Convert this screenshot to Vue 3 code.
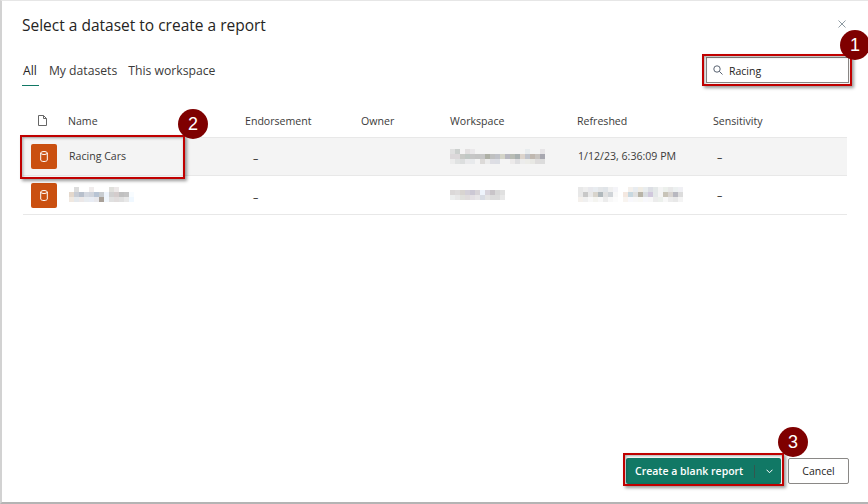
<template>
  <div class="page">
    <div class="dialog">
      <div class="title-row">
        <h1 class="title">Select a dataset to create a report</h1>
        <svg class="close" width="8" height="8" viewBox="0 0 8 8">
          <path d="M.5 .5 7.500 7.500M7.500 .5 .5 7.500" stroke="#8f9ba3" stroke-width="1" fill="none" />
        </svg>
      </div>

      <div class="tool-row">
        <div class="tabs">
          <span class="tab active">All</span>
          <span class="tab">My datasets</span>
          <span class="tab">This workspace</span>
        </div>
        <div class="search">
          <svg width="10" height="10" viewBox="0 0 10 10">
            <circle cx="4" cy="4" r="3.200" stroke="#5a6472" fill="none" />
            <path d="M6.300 6.300 9.500 9.500" stroke="#5a6472" fill="none" />
          </svg>
          <span class="search-text">Racing</span>
        </div>
      </div>

      <div class="table">
        <div class="row head">
          <div class="cell-icon">
            <svg width="9" height="11" viewBox="0 0 9 11">
              <path d="M.5 .5h5l3 3v7H.5zM5.500 .5v3h3" stroke="#666" fill="none" />
            </svg>
          </div>
          <div>Name</div>
          <div>Endorsement</div>
          <div>Owner</div>
          <div>Workspace</div>
          <div>Refreshed</div>
          <div>Sensitivity</div>
        </div>

        <div v-for="row in rows" :key="row.id" class="row" :class="{ selected: row.selected }">
          <div class="cell-icon">
            <div class="dataset-icon">
              <svg width="8" height="11" viewBox="0 0 8 11">
                <ellipse cx="4" cy="2" rx="3.300" ry="1.500" stroke="#fff" fill="none" />
                <path d="M.7 2v7c0 .9 1.500 1.500 3.300 1.500s3.300-.6 3.300-1.500V2" stroke="#fff" fill="none" />
              </svg>
            </div>
          </div>
          <div class="name">
            <span v-if="row.name">{{ row.name }}</span>
            <svg v-else class="blur" :width="mosaicWidth(row.blurName)" :height="row.blurName.length * 5">
              <rect v-for="c in cells(row.blurName)" :key="c.k" :x="c.x" :y="c.y" width="5" height="5" :fill="c.fill" />
            </svg>
          </div>
          <div class="dash low">–</div>
          <div></div>
          <div class="space">
            <svg class="blur" :width="mosaicWidth(row.blurSpace)" :height="row.blurSpace.length * 5">
              <rect v-for="c in cells(row.blurSpace)" :key="c.k" :x="c.x" :y="c.y" width="5" height="5" :fill="c.fill" />
            </svg>
          </div>
          <div class="refreshed">
            <span v-if="row.refreshed">{{ row.refreshed }}</span>
            <svg v-else class="blur" :width="mosaicWidth(row.blurDate)" :height="row.blurDate.length * 5">
              <rect v-for="c in cells(row.blurDate)" :key="c.k" :x="c.x" :y="c.y" width="5" height="5" :fill="c.fill" />
            </svg>
          </div>
          <div class="dash">–</div>
        </div>
      </div>

      <div class="footer">
        <div class="primary">
          <span class="primary-label">Create a blank report</span>
          <span class="split"></span>
          <svg width="7" height="5" viewBox="0 0 7 5">
            <path d="M.5 .7 3.500 3.700 6.500 .7" stroke="#fff" fill="none" />
          </svg>
        </div>
        <div class="cancel">Cancel</div>
      </div>
    </div>

    <div class="callout box-search"></div>
    <div class="callout box-row"></div>
    <div class="callout box-button"></div>
    <div class="badge badge-1">1</div>
    <div class="badge badge-2">2</div>
    <div class="badge badge-3">3</div>
  </div>
</template>

<script setup>
// blurred cells from the screenshot, one string per line of 5px blocks, "-" = nothing
const rows = [
  {
    id: 1,
    selected: true,
    name: 'Racing Cars',
    refreshed: '1/12/23, 6:36:09 PM',
    blurSpace: [
      'e0e0e0 ccd0ce - e2e0e0 eae8ea - - - - - - - - - - e8ecee - - e6e4e6',
      'dcd8da dcd8da c8cac6 c0c8c4 c6c6c6 c4c4c4 c6c6c6 aeb0a6 bfc0c0 c0c2c8 d4d4c8 b8b8c0 b8bcb4 a8b0b0 dcd4cc c0c4cc c0b8b0 c8c4c0 a8a8b0',
      'ececec e0e2e2 dcdede eaeaec e8eaec - dcdad8 ececec dedee4 dcdee4 - - eceaea dedee0 ececec ecece8 e8e8e4 dedcdc dcdcdc',
    ],
  },
  {
    id: 2,
    name: '',
    blurName: [
      '- dcdcdc - - f0ecec - - - e0e0dc ece8e8 - - -',
      'e4d8cc c8ccd4 b8c0cc d4d8e0 d0d4dc b8c4d4 c8ccd0 eef4fc d0d0d0 d4cccc c0c0c0 c4c4c4 f8fcff',
      'f0e8e0 e4e8ec ece8e8 e8ecf0 e8ecf4 e8e8ec a8a098 f0f6fc e0e0e0 e0dcdc e0e0e0 e8e8e8 f0f8ff',
    ],
    blurSpace: [
      'dbd8d8 dedcdc d8d4d0 d4d0d8 ccc8d4 d8d4d8 eef4fc d8d4dc c8c4c8 d8d8d8 e0e0e0',
      'eceeee e8e8e8 e0e0dc e0dcdc e4e0e4 e8e6e8 d8dce4 e4e4e4 dcdcdc dcdcdc e8e8e8',
    ],
    blurDate: [
      'e8e8e8 eeeeee e8e8ec e8ecf0 e4e6e8 e0e4e8 f0f0f0 f4f4f8 - - f4f0ec e8ecf0 f0ece4 e8ecee dcdee4 e4e8e8 f4f4f4 ecf0ec e8e8e8 ecf0f0 f0f0f4 -',
      'e8e8e8 c8c8c8 e8e8e8 d8d4cc b0b8bc e0e0e0 d0d4d8 f8f8f8 - f4e8e0 c8d8e0 e0e0e0 b8b4a8 d8dce0 d0c8dc e4e8e8 f4f4f4 c8c4b8 d8d4d0 b8b8c0 dcdcdc -',
      'f4f0ec f0f0f0 f8f8f8 f4f4f0 f8f8f8 ececec f8f8f8 fcfcfc - f8f4f0 f8f8fc f8f8f8 f8f8f4 f8f8fc f8f8f8 ececec ecf0ec f8f8f8 ececec e8e8e8 f4f4f4 -',
    ],
  },
]

function mosaicWidth(lines) {
  return lines[0].split(' ').length * 5
}

function cells(lines) {
  const out = []
  lines.forEach((line, y) => {
    line.split(' ').forEach((hex, x) => {
      if (hex !== '-') out.push({ k: x + '-' + y, x: x * 5, y: y * 5, fill: '#' + hex })
    })
  })
  return out
}
</script>

<style>
html,
body {
  margin: 0;
  background: #fff;
}
</style>

<style scoped>
.page {
  position: relative;
  width: 868px;
  height: 504px;
  overflow: hidden;
  box-sizing: border-box;
  background: #fff;
  border-top: 1px solid #e6e6e6;
  border-left: 2px solid #d2d2d2;
  border-bottom: 2px solid #b4b4b4;
  font-family: "Open Sans", "Noto Sans", sans-serif;
  color: #252423;
}

.dialog {
  display: flex;
  flex-direction: column;
  height: 100%;
  box-sizing: border-box;
  padding: 0 19px 18px 20px;
}

.title-row {
  display: flex;
  align-items: center;
  justify-content: space-between;
  height: 50px;
}

.title {
  margin: -2px 0 0;
  font-size: 15.500px;
  font-weight: 500;
  color: #252423;
}

.close {
  margin-top: -5px;
  margin-right: 3px;
}

.tool-row {
  display: flex;
  justify-content: space-between;
  align-items: flex-start;
  margin-top: 5px;
  height: 31px;
}

.tabs {
  display: flex;
  gap: 11px;
  font-size: 12.200px;
  padding-top: 6px;
}

.tab {
  color: #3b3a39;
  height: 23px;
}

.tab.active {
  color: #252423;
  border-bottom: 1px solid #117865;
  padding: 0 2px 0 1px;
  margin-right: -1px;
}

.search {
  display: flex;
  align-items: center;
  gap: 6px;
  width: 143px;
  height: 26px;
  box-sizing: border-box;
  margin-top: 1px;
  padding-left: 6px;
  border: 1px solid #8a8886;
  font-size: 10.500px;
  color: #252423;
}

.search-text {
  padding-top: 2px;
}

.table {
  margin-top: 14px;
  padding-left: 1px;
  width: 824px;
}

.row {
  display: grid;
  grid-template-columns: 46px 177px 116px 89px 127px 136px 133px;
  align-items: center;
  height: 38px;
  font-size: 10.600px;
  color: #3b3a39;
  border-bottom: 1px solid #e8e8e8;
}

.row.head {
  grid-template-columns: 45px 177px 116px 89px 127px 136px 134px;
  height: 36px;
  align-items: start;
  line-height: 40px;
}

.row.selected {
  height: 37px;
  background: #f4f4f4;
}

.cell-icon {
  display: flex;
  padding-left: 8px;
}

.head .cell-icon {
  padding-left: 15px;
  padding-top: 14px;
  line-height: 0;
}

.dataset-icon {
  display: flex;
  align-items: center;
  justify-content: center;
  width: 26px;
  height: 25px;
  border-radius: 2px;
  background: #ca5010;
}

.name {
  padding-bottom: 2px;
}

.space {
  margin-left: -1px;
}

.blur {
  display: block;
}

.dash {
  padding-left: 3px;
  color: #252423;
}

.dash.low {
  padding-left: 7px;
  padding-top: 3px;
}

.refreshed {
  padding-bottom: 2px;
}

.footer {
  display: flex;
  justify-content: flex-end;
  gap: 7px;
  margin-top: auto;
}

.primary {
  display: flex;
  align-items: center;
  width: 155px;
  height: 26px;
  box-sizing: border-box;
  padding-left: 9px;
  border-radius: 2px;
  background: #117865;
  color: #fff;
  font-size: 10.500px;
  font-weight: 600;
}

.primary-label {
  width: 119px;
}

.split {
  width: 1px;
  height: 13px;
  margin-right: 11px;
  background: #33574f;
}

.cancel {
  display: flex;
  align-items: center;
  justify-content: center;
  width: 61px;
  height: 26px;
  box-sizing: border-box;
  border: 1px solid #8a8886;
  border-radius: 2px;
  font-size: 10.500px;
  color: #252423;
}

.callout {
  position: absolute;
  box-sizing: border-box;
  border: 2.500px solid #c00000;
  box-shadow: 2px 2px 3px rgba(0, 0, 0, 0.4), inset 1px 1px 3px rgba(0, 0, 0, 0.35);
}

.box-search {
  left: 700px;
  top: 53px;
  width: 150px;
  height: 32px;
}

.box-row {
  left: 18px;
  top: 134px;
  width: 165px;
  height: 44px;
}

.box-button {
  left: 621px;
  top: 452px;
  width: 161px;
  height: 33px;
}

.badge {
  position: absolute;
  display: flex;
  align-items: center;
  justify-content: center;
  width: 30px;
  height: 30px;
  border-radius: 50%;
  background: #7f0000;
  color: #fff;
  font-family: "Liberation Sans", sans-serif;
  font-size: 18px;
}

.badge-1 {
  left: 838px;
  top: 29px;
}

.badge-2 {
  left: 176px;
  top: 108px;
}

.badge-3 {
  left: 776px;
  top: 426px;
}
</style>
